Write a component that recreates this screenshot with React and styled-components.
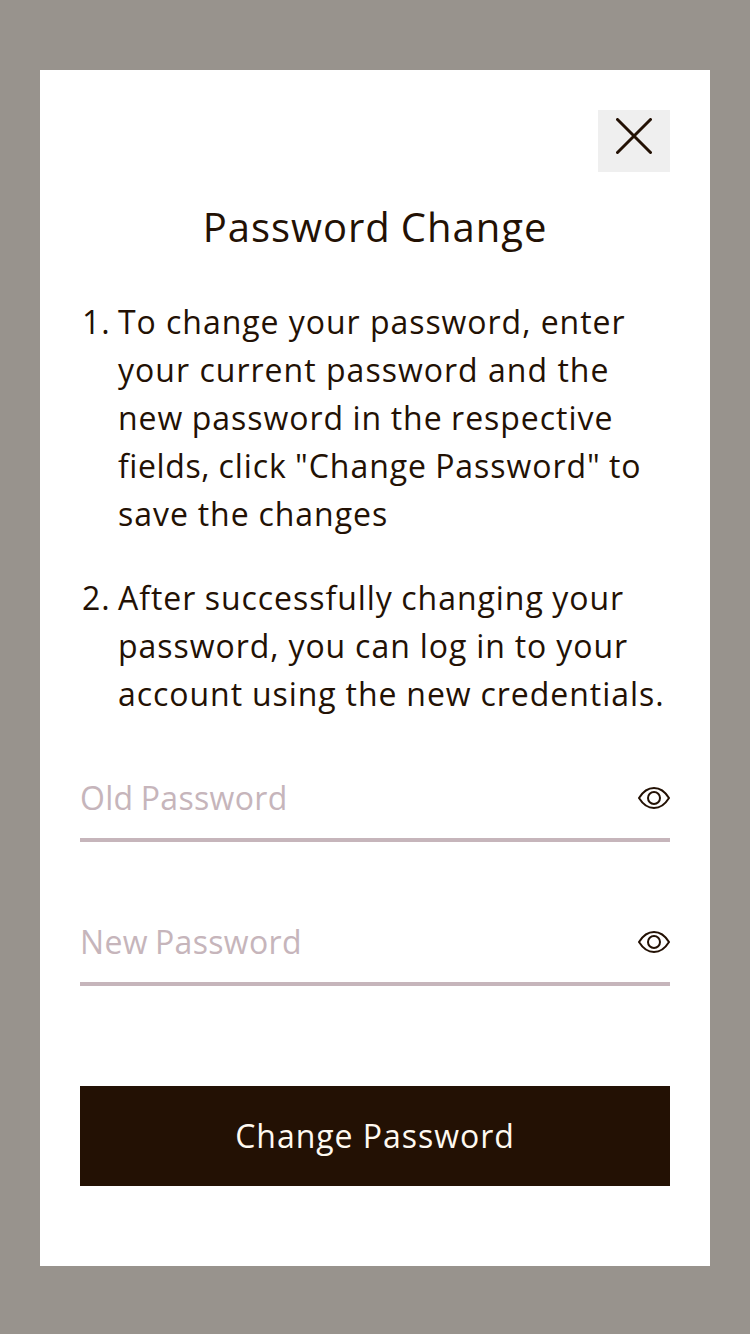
import React from "react";
import styled, { createGlobalStyle } from "styled-components";

const GlobalStyle = createGlobalStyle`
  *, *::before, *::after { box-sizing: border-box; }
  body { margin: 0; background: #98938d; }
`;

const Backdrop = styled.main`
  height: 1334px;
  padding: 70px 40px 68px;
  background: #98938d;
  color: #231104;
  font-family: "Open Sans", sans-serif;
  font-size: 32px;
  line-height: 48px;
  letter-spacing: 0.96px;
`;

const Modal = styled.form`
  display: flex;
  flex-direction: column;
  height: 1196px;
  padding: 40px;
  background: #fff;
`;

const CloseButton = styled.button`
  flex-shrink: 0;
  align-self: flex-end;
  display: flex;
  justify-content: center;
  width: 72px;
  height: 62px;
  padding: 8px 0 0;
  border: 0;
  background: #efefef;
  color: inherit;
`;

const Title = styled.h1`
  margin: 25px 0 0;
  font-size: 40px;
  font-weight: 400;
  line-height: 60px;
  letter-spacing: 0.98px;
  word-spacing: -1.4px;
  text-align: center;
`;

const Steps = styled.ol`
  display: flex;
  flex-direction: column;
  gap: 36px;
  margin: 41px 0 0;
  padding: 0;
  list-style: none;
  counter-reset: step;
`;

const Step = styled.li`
  display: grid;
  grid-template-columns: 36px 1fr;
  padding-left: 2px;
  counter-increment: step;

  &::before { content: counter(step) "."; }
`;

const Line = styled.span`
  display: block;
  white-space: nowrap;
  letter-spacing: ${({ $tracking = 0.96 }) => $tracking}px;
  word-spacing: ${({ $gap = 0 }) => $gap}px;
`;

const TightWord = styled.span`
  letter-spacing: 0.6px;
`;

const Field = styled.label`
  flex-shrink: 0;
  display: flex;
  align-items: center;
  height: 68px;
  margin-top: ${({ $gap }) => $gap}px;
  padding-bottom: 16px;
  border-bottom: 4px solid #c6b5bb;
`;

const PasswordInput = styled.input`
  flex: 1;
  min-width: 0;
  height: 48px;
  padding: 0;
  border: 0;
  outline: 0;
  background: transparent;
  color: inherit;
  font: inherit;
  letter-spacing: 0.32px;
  word-spacing: -1.4px;

  &::placeholder { color: #c6b5bb; opacity: 1; }
`;

const RevealButton = styled.button`
  display: flex;
  padding: 0;
  border: 0;
  background: none;
  color: inherit;
`;

const SubmitButton = styled.button`
  flex-shrink: 0;
  height: 100px;
  margin-top: 100px;
  padding: 0;
  border: 0;
  background: #231104;
  color: #fff9f1;
  font: inherit;
  letter-spacing: inherit;
`;

const CloseIcon = () => (
  <svg width="36" height="36" viewBox="0 0 36 36" fill="none" stroke="currentColor" strokeWidth="3" strokeLinecap="round">
    <path d="M1.5 1.5l33 33M34.5 1.5l-33 33" />
  </svg>
);

const EyeIcon = () => (
  <svg width="32" height="32" viewBox="0 0 32 32" fill="none" stroke="currentColor" strokeWidth="2" strokeLinejoin="round">
    <path d="M1 16C5 9.5 10 6 16 6s11 3.500 15 10c-4 6.500-9 10-15 10S5 22.500 1 16z" />
    <circle cx="16" cy="16" r="6" />
  </svg>
);

const PasswordField = ({ label, gap }) => (
  <Field $gap={gap}>
    <PasswordInput type="password" placeholder={label} />
    <RevealButton type="button" aria-label="Show password"><EyeIcon /></RevealButton>
  </Field>
);

export default function App() {
  return (
    <>
      <GlobalStyle />
      <Backdrop>
        <Modal>
          <CloseButton type="button" aria-label="Close"><CloseIcon /></CloseButton>
          <Title>Password Change</Title>
          <Steps>
            <Step>
              <div>
                <Line>To change your password, enter</Line>
                <Line $tracking={1.02}>your current password and the</Line>
                <Line $gap={-0.75}>new password in the respective</Line>
                <Line $gap={-1.1}><TightWord>fields,</TightWord> click "Change Password" to</Line>
                <Line $gap={-0.4}>save the changes</Line>
              </div>
            </Step>
            <Step>
              <div>
                <Line $gap={-0.8}>After successfully changing your</Line>
                <Line $gap={-0.35}>password, you can log in to your</Line>
                <Line $gap={-0.4}>account using the new credentials.</Line>
              </div>
            </Step>
          </Steps>
          <PasswordField label="Old Password" gap={56} />
          <PasswordField label="New Password" gap={76} />
          <SubmitButton type="button">Change Password</SubmitButton>
        </Modal>
      </Backdrop>
    </>
  );
}
